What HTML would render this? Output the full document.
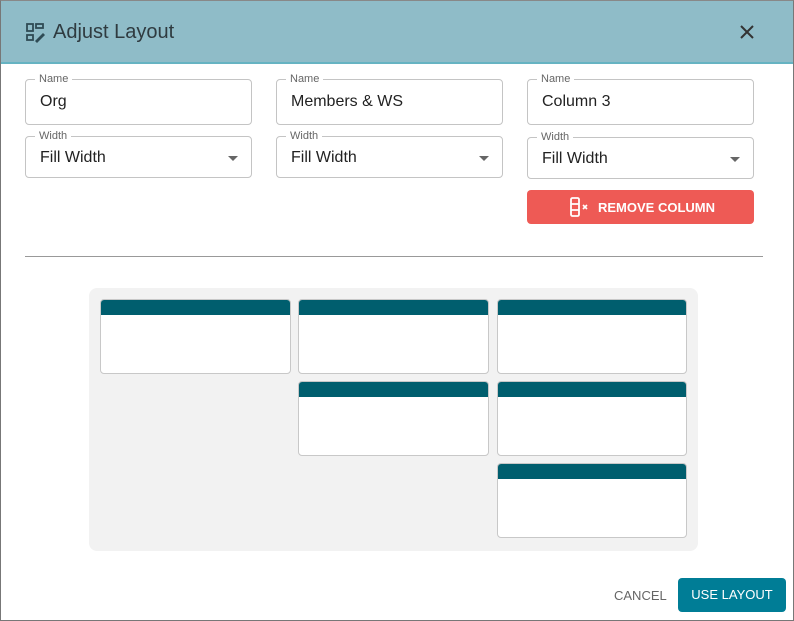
<!DOCTYPE html>
<html><head><meta charset="utf-8"><style>
*{box-sizing:border-box;margin:0;padding:0}
body{width:794px;height:621px;background:#fff;font-family:"Liberation Sans",sans-serif;position:relative;overflow:hidden}
.dlg{position:absolute;left:0;top:0;width:794px;height:621px;border:1px solid #777;border-top:1px solid #888;background:#fff}
.hdr{position:absolute;left:0;top:0;width:792px;height:63px;background:#8fbcc8;border-bottom:2px solid #66b3c2}
.title{position:absolute;left:52px;top:20px;font-size:20px;color:#2f3b40}
.fld{position:absolute;border:1px solid #c4c4c4;border-radius:4px;width:227px}
.lbl{position:absolute;top:-8px;left:9px;background:#fff;padding:0 4px;font-size:11px;color:#666;line-height:14px}
.val{position:absolute;left:14px;font-size:16px;color:#222}
.arr{position:absolute;right:13px;top:19px;width:0;height:0;border-left:5px solid transparent;border-right:5px solid transparent;border-top:5px solid #666}
.rm{position:absolute;left:526px;top:189px;width:227px;height:34px;background:#ee5a55;border-radius:4px;color:#fff;font-size:13px;font-weight:bold}
.div{position:absolute;left:24px;top:255px;width:738px;height:1px;background:#999}
.prev{position:absolute;left:88px;top:287px;width:609px;height:263px;background:#f2f2f2;border-radius:8px}
.card{position:absolute;width:191px;height:75px;background:#fff;border:1px solid #c8c8c8;border-radius:4px;overflow:hidden}
.card:before{content:"";display:block;height:15px;background:#005e6e}
.use{position:absolute;left:677px;top:577px;width:108px;height:34px;background:#007d96;border-radius:4px;color:#fff;font-size:13px;line-height:34px;text-align:center}
.cancel{position:absolute;left:613px;top:587px;font-size:13px;color:#666}
</style></head><body>
<div class="dlg">
<div class="hdr">
<svg style="position:absolute;left:25px;top:22px" width="20" height="20" viewBox="0 0 20 20" fill="none" stroke="#2f4b55" stroke-width="1.8"><rect x="1" y="1" width="6" height="7"/><rect x="1" y="12" width="6" height="5"/><rect x="10" y="1" width="7" height="4"/><path d="M9 18l8-8 2 2-8 8z" fill="#2f4b55" stroke="none"/></svg>
<div class="title">Adjust Layout</div>
<svg style="position:absolute;left:739px;top:24px" width="14" height="14" viewBox="0 0 14 14" stroke="#333" stroke-width="2"><path d="M1 1L13 13M13 1L1 13"/></svg>
</div>
<div class="fld" style="left:24px;top:78px;height:46px"><span class="lbl">Name</span><span class="val" style="top:13px">Org</span></div>
<div class="fld" style="left:275px;top:78px;height:46px"><span class="lbl">Name</span><span class="val" style="top:13px">Members &amp; WS</span></div>
<div class="fld" style="left:526px;top:78px;height:46px"><span class="lbl">Name</span><span class="val" style="top:13px">Column 3</span></div>
<div class="fld" style="left:24px;top:135px;height:42px"><span class="lbl">Width</span><span class="val" style="top:12px">Fill Width</span><span class="arr"></span></div>
<div class="fld" style="left:275px;top:135px;height:42px"><span class="lbl">Width</span><span class="val" style="top:12px">Fill Width</span><span class="arr"></span></div>
<div class="fld" style="left:526px;top:136px;height:42px"><span class="lbl">Width</span><span class="val" style="top:12px">Fill Width</span><span class="arr"></span></div>
<div class="rm">
<svg style="position:absolute;left:43px;top:7px" width="20" height="20" viewBox="0 0 20 20" fill="none" stroke="#fff" stroke-width="1.8"><rect x="1" y="1" width="8" height="18" rx="1.5"/><path d="M1 7h8M1 13h8"/><path d="M13 8l4 4M17 8l-4 4" stroke-width="1.6"/></svg>
<span style="position:absolute;left:71px;top:10px">REMOVE COLUMN</span></div>
<div class="div"></div>
<div class="prev"></div>
<div class="card" style="left:99px;top:298px"></div>
<div class="card" style="left:297px;top:298px"></div>
<div class="card" style="left:496px;top:298px;width:190px"></div>
<div class="card" style="left:297px;top:380px"></div>
<div class="card" style="left:496px;top:380px;width:190px"></div>
<div class="card" style="left:496px;top:462px;width:190px"></div>
<div class="cancel">CANCEL</div>
<div class="use">USE LAYOUT</div>
</div>
</body></html>
